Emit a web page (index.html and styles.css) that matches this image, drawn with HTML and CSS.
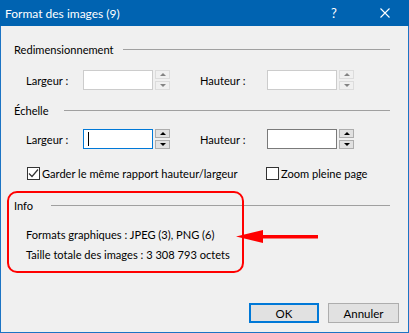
FILE: index.html
```html
<!DOCTYPE html>
<html lang="fr">

<head>
    <meta charset="UTF-8">
    <title>Format des images</title>
    <link rel="stylesheet" href="styles.css">
</head>

<body>
    <div class="window">
        <div class="titlebar">
            <span class="title">Format des images (9)</span>
            <span class="help">?</span>
            <svg class="close" width="10" height="10" viewBox="0 0 10 10">
                <path d="M0.5 0.5 L9.5 9.5 M9.5 0.5 L0.5 9.5" stroke="#fff" stroke-width="1.1" fill="none"/>
            </svg>
        </div>

        <div class="content">
            <div class="group-head head-resize">
                <span class="group-label">Redimensionnement</span>
                <span class="group-line"></span>
            </div>
            <div class="field-row row-resize">
                <label class="field-label">Largeur :</label>
                <span class="input disabled"></span>
                <span class="spinner disabled"><i class="up"></i><i class="down"></i></span>
                <label class="field-label second">Hauteur :</label>
                <span class="input disabled"></span>
                <span class="spinner disabled"><i class="up"></i><i class="down"></i></span>
            </div>

            <div class="group-head head-scale">
                <span class="group-label">Échelle</span>
                <span class="group-line"></span>
            </div>
            <div class="field-row row-scale">
                <label class="field-label">Largeur :</label>
                <span class="input focused"><span class="caret"></span></span>
                <span class="spinner"><i class="up"></i><i class="down"></i></span>
                <label class="field-label second">Hauteur :</label>
                <span class="input"></span>
                <span class="spinner"><i class="up"></i><i class="down"></i></span>
            </div>

            <div class="check-row">
                <span class="check-item first">
                    <span class="box checked">
                        <svg width="11" height="11" viewBox="0 0 11 11">
                            <path d="M1 5.5 L4 8.5 L10 1.5" stroke="#333" stroke-width="1.2" fill="none"/>
                        </svg>
                    </span>
                    Garder le même rapport hauteur/largeur
                </span>
                <span class="check-item zoom">
                    <span class="box"></span>
                    Zoom pleine page
                </span>
            </div>

            <div class="group-head head-info">
                <span class="group-label">Info</span>
                <span class="group-line"></span>
            </div>
            <p class="info-line first">Formats graphiques : JPEG (3), PNG (6)</p>
            <p class="info-line">Taille totale des images : 3 308 793 octets</p>

            <div class="buttons">
                <button class="btn default">OK</button>
                <button class="btn">Annuler</button>
            </div>
        </div>

        <!-- annotation -->
        <div class="highlight"></div>
        <svg class="arrow" width="84" height="16" viewBox="0 0 84 16">
            <rect x="24" y="6" width="58" height="3.5" fill="#ff0000"/>
            <polygon points="0,7.5 27,1 27,14" fill="#ff0000"/>
        </svg>
    </div>
</body>

</html>
```

FILE: styles.css
```css
* {
    box-sizing: border-box;
}

body {
    margin: 0;
    font-family: Lato, "Noto Sans", sans-serif;
    font-size: 11.1px;
    color: #000;
}

.window {
    position: relative;
    width: 409px;
    height: 333px;
    border: 1px solid #1c74c4;
    border-top: 0;
    background: #f0f0f0;
    display: flex;
    flex-direction: column;
}

.titlebar {
    height: 26px;
    margin: 0 -1px;
    background: #0063b1;
    color: #fff;
    display: flex;
    align-items: center;
    padding-left: 5px;
}

.title {
    flex: 1;
    font-size: 12px;
}

.help {
    width: 12px;
    margin-right: 40px;
    text-align: center;
    font-size: 13px;
}

.close {
    margin-right: 19px;
}

.content {
    flex: 1;
    display: flex;
    flex-direction: column;
    padding: 0 18px 9px 13px;
}

.group-head {
    display: flex;
    align-items: center;
    height: 16px;
}

.group-label {
    flex: none;
}

.group-line {
    flex: 1;
    height: 1px;
    background: #a0a0a0;
}

.head-resize {
    margin-top: 15px;
}

.head-resize .group-label {
    width: 109px;
}

.head-scale {
    margin-top: 12px;
}

.head-scale .group-label {
    width: 50px;
}

.head-info {
    margin-top: 16px;
}

.head-info .group-label {
    width: 37px;
}

.field-row {
    display: flex;
    align-items: center;
    height: 20px;
    padding-left: 12px;
}

.row-resize {
    margin-top: 13px;
}

.row-scale {
    margin-top: 11px;
}

.field-label {
    width: 57px;
}

.field-label.second {
    width: 67px;
    margin-left: 30px;
}

.input {
    width: 70px;
    height: 20px;
    background: #fff;
    border: 1px solid #7a7a7a;
    display: flex;
    align-items: center;
    padding-left: 4px;
}

.input.disabled {
    border-color: #cccccc;
}

.input.focused {
    border-color: #0078d7;
}

.caret {
    width: 1px;
    height: 14px;
    background: #000;
}

.spinner {
    width: 15px;
    height: 20px;
    margin-left: 2px;
    display: flex;
    flex-direction: column;
    justify-content: space-between;
}

.spinner i {
    height: 9px;
    background: #e1e1e1;
    border: 1px solid #adadad;
    display: flex;
    align-items: center;
    justify-content: center;
}

.spinner i::after {
    content: "";
    border-left: 3px solid transparent;
    border-right: 3px solid transparent;
}

.spinner .up::after {
    border-bottom: 3px solid #000;
}

.spinner .down::after {
    border-top: 3px solid #000;
}

.spinner.disabled i {
    background: #f0f0f0;
    border-color: #dcdcdc;
}

.spinner.disabled .up::after {
    border-bottom-color: #838383;
}

.spinner.disabled .down::after {
    border-top-color: #838383;
}

.check-row {
    display: flex;
    align-items: center;
    height: 16px;
    margin-top: 16px;
    padding-left: 13px;
    white-space: nowrap;
}

.check-item {
    display: flex;
    align-items: center;
    flex: none;
}

.check-item.first {
    width: 239px;
}

.box {
    width: 13px;
    height: 13px;
    flex: none;
    border: 1px solid #333;
    background: #fff;
    margin-right: 2px;
    display: flex;
    align-items: center;
    justify-content: center;
}

.info-line {
    margin: 4px 0 0 12px;
    height: 16px;
    line-height: 16px;
}

.info-line.first {
    margin-top: 14px;
}

.buttons {
    margin-top: auto;
    display: flex;
    justify-content: flex-end;
    gap: 9px;
    margin-right: -9px;
}

.btn {
    height: 20px;
    padding: 0;
    font-family: inherit;
    font-size: 11.5px;
    color: #000;
    background: #e1e1e1;
    border: 1px solid #adadad;
}

.btn.default {
    width: 70px;
    border: 2px solid #0078d7;
}

.btn:not(.default) {
    width: 71px;
}

.highlight {
    position: absolute;
    left: 6px;
    top: 191px;
    width: 237px;
    height: 82px;
    border: 2px solid #ff0000;
    border-radius: 10px;
}

.arrow {
    position: absolute;
    left: 235px;
    top: 229px;
}
```
